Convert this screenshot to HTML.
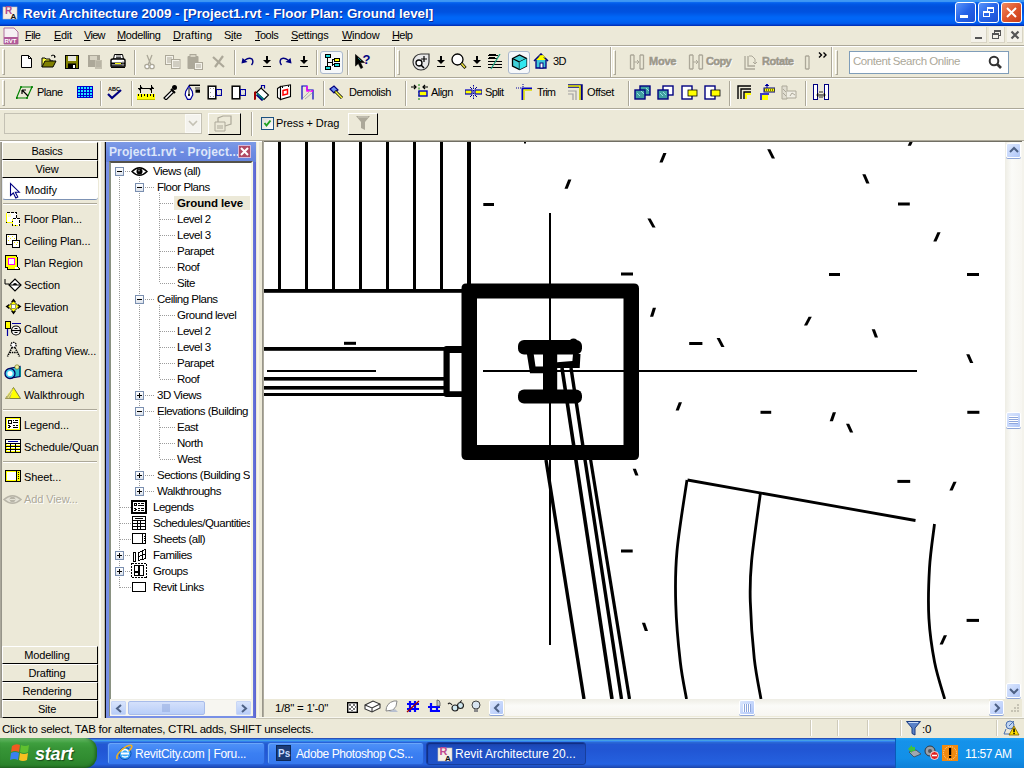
<!DOCTYPE html>
<html><head><meta charset="utf-8">
<style>
*{margin:0;padding:0;box-sizing:border-box}
html,body{width:1024px;height:768px;overflow:hidden;background:#ece9d8;font-family:"Liberation Sans",sans-serif;font-size:11px;color:#000}
div,svg,span{position:absolute}
.nw{white-space:nowrap}
#title{left:0;top:0;width:1024px;height:26px;background:linear-gradient(#409af4 0,#3a94f4 1.5px,#0a68f0 2.5px,#0058e6 4px,#0050dc 7px,#0052e0 12px,#0066f6 17px,#0066f8 19px,#0060f0 22px,#0056e8 24px,#0036c4 25px,#0030b0 26px)}
.tt{left:23px;top:6px;color:#fff;font-weight:bold;font-size:13.4px;text-shadow:1px 1px 0 #0c2a9a}
.tbtn{top:2px;width:21px;height:21px;border:1px solid #fff;border-radius:3px;background:linear-gradient(135deg,#5b95fa,#2563e8 50%,#1c50d4)}
.mi{top:30px;font-size:11px;line-height:11px;letter-spacing:-0.4px}
.mi u{text-decoration:underline;text-underline-offset:1px}
.hsep{height:2px;border-top:1px solid #aca899;border-bottom:1px solid #fff}
.grip{width:3px;border-left:1px solid #fff;border-top:1px solid #fff;border-right:1px solid #aca899;border-bottom:1px solid #aca899}
.vs{width:2px;border-left:1px solid #aca899;border-right:1px solid #fff}
.lbl{font-size:11px;line-height:11px;white-space:nowrap;letter-spacing:-0.1px}
.dis{color:#9c988a;font-weight:bold;text-shadow:1px 1px 0 #fff;-webkit-text-stroke:0.5px #9c988a}
.tree{font-size:11.5px;line-height:12px;white-space:nowrap;letter-spacing:-0.5px}
.dbtn{left:2px;width:96px;height:18px;background:#ece9d8;border-top:1px solid #fff;border-left:1px solid #fff;border-right:1px solid #000;border-bottom:1px solid #000;text-align:center;font-size:11px;line-height:16px;letter-spacing:-0.2px;padding-right:6px}
.dl{left:24px;font-size:11px;line-height:12px;white-space:nowrap;letter-spacing:-0.1px}
.dots{border-left:1px dotted #a0a0a0}
.doth{border-top:1px dotted #a0a0a0;height:1px}
.pm{width:9px;height:9px;border:1px solid #7a8fb0;background:linear-gradient(#fff,#dde3ec);}
.pm:before{content:"";position:absolute;left:1px;top:3px;width:5px;height:1px;background:#000}
.pm.p:after{content:"";position:absolute;left:3px;top:1px;width:1px;height:5px;background:#000}
</style></head><body>

<!-- ============ TITLE BAR ============ -->
<div id="title">
  <svg style="left:2px;top:4px" width="17" height="17" viewBox="0 0 17 17">
    <rect x="1" y="3" width="14" height="12" fill="#f4efe6" stroke="#c8c0b8" stroke-width="0.6"/>
    <text x="3" y="10" font-family="Liberation Sans" font-weight="bold" font-size="10" fill="#b04a8a">R</text>
    <text x="8.5" y="15" font-family="Liberation Sans" font-weight="bold" font-size="8" fill="#111">A</text>
  </svg>
  <div class="tt nw">Revit Architecture 2009 - [Project1.rvt - Floor Plan: Ground level]</div>
  <div class="tbtn" style="left:955px"><div style="left:4px;top:12px;width:8px;height:3px;background:#fff"></div></div>
  <div class="tbtn" style="left:978px">
    <div style="left:8px;top:4px;width:7px;height:6px;border:1px solid #fff;border-top-width:2px"></div>
    <div style="left:4px;top:8px;width:7px;height:6px;border:1px solid #fff;border-top-width:2px;background:#2a66e8"></div>
  </div>
  <div class="tbtn" style="left:1001px;background:linear-gradient(135deg,#f08a60,#e0562c 50%,#c83c18)">
    <svg style="left:3px;top:3px" width="13" height="13"><path d="M2 2L11 11M11 2L2 11" stroke="#fff" stroke-width="2"/></svg>
  </div>
</div>

<!-- ============ MENU BAR ============ -->
<div id="menu" style="left:0;top:26px;width:1024px;height:20px;background:#ece9d8">
</div>
<svg style="left:2px;top:27px" width="18" height="18" viewBox="0 0 18 18">
  <path d="M2 1H12L16 5V17H2Z" fill="#f6f0f4" stroke="#b070a0" stroke-width="1"/>
  <rect x="2" y="10" width="14" height="7" fill="#b05a98"/>
  <text x="2.5" y="16.3" font-family="Liberation Sans" font-weight="bold" font-size="6" fill="#fff">RVT</text>
</svg>
<div class="mi nw" style="left:25px;letter-spacing:-0.6px"><u>F</u>ile</div>
<div class="mi nw" style="left:54px;letter-spacing:-0.3px"><u>E</u>dit</div>
<div class="mi nw" style="left:84px;letter-spacing:-0.7px"><u>V</u>iew</div>
<div class="mi nw" style="left:117px;letter-spacing:-0.4px"><u>M</u>odelling</div>
<div class="mi nw" style="left:173px;letter-spacing:0.1px"><u>D</u>rafting</div>
<div class="mi nw" style="left:224px;letter-spacing:-0.3px">S<u>i</u>te</div>
<div class="mi nw" style="left:255px;letter-spacing:-0.5px"><u>T</u>ools</div>
<div class="mi nw" style="left:291px;letter-spacing:-0.3px"><u>S</u>ettings</div>
<div class="mi nw" style="left:342px;letter-spacing:-0.3px"><u>W</u>indow</div>
<div class="mi nw" style="left:392px;letter-spacing:-0.6px"><u>H</u>elp</div>
<!-- MDI buttons -->
<div style="left:971px;top:27px;width:16px;height:16px;background:#f4f2ea;border-right:1px solid #d8d4c4;border-bottom:1px solid #d8d4c4"><div style="left:4px;top:10px;width:7px;height:2px;background:#555"></div></div>
<div style="left:989px;top:27px;width:16px;height:16px;background:#f4f2ea;border-right:1px solid #d8d4c4;border-bottom:1px solid #d8d4c4">
  <div style="left:5px;top:3px;width:7px;height:6px;border:1px solid #555;border-top-width:2px"></div>
  <div style="left:3px;top:6px;width:7px;height:6px;border:1px solid #555;border-top-width:2px;background:#f4f2ea"></div>
</div>
<div style="left:1007px;top:27px;width:16px;height:16px;background:#f4f2ea;border-right:1px solid #d8d4c4;border-bottom:1px solid #d8d4c4">
  <svg style="left:3px;top:3px" width="10" height="10"><path d="M1.5 1.5L8.5 8.5M8.5 1.5L1.5 8.5" stroke="#555" stroke-width="2.2"/></svg>
</div>
<div class="hsep" style="left:0;top:45px;width:1024px"></div>

<!-- ============ TOOLBAR ROW 1 ============ -->
<div class="grip" style="left:2px;top:49px;height:26px"></div>
<!-- new -->
<svg style="left:21px;top:54px" width="12" height="15"><path d="M0.5 1.5H7.5L10.5 4.5V13.5H0.5Z" fill="#fff" stroke="#000"/><path d="M7.5 1.5V4.5H10.5" fill="none" stroke="#000"/></svg>
<!-- open -->
<svg style="left:41px;top:54px" width="17" height="15"><path d="M10 2Q12 0 14 2" fill="none" stroke="#000"/><path d="M13 1l2 2-2 1z" fill="#000"/><path d="M1 13V4H4L5 5H9V7H12" fill="#ffff40" stroke="#000"/><path d="M1 13L4 7H15L12 13Z" fill="#808000" stroke="#000"/></svg>
<!-- save -->
<svg style="left:65px;top:55px" width="15" height="14"><rect x="0.5" y="0.5" width="13" height="13" fill="#808000" stroke="#000"/><rect x="3" y="1" width="8" height="5" fill="#e8e8e0"/><rect x="3" y="8.5" width="8" height="5" fill="#000"/><rect x="8" y="10" width="2" height="3" fill="#fff"/></svg>
<!-- save as disabled -->
<svg style="left:87px;top:54px" width="17" height="16"><rect x="1" y="1" width="12" height="12" fill="#aca899"/><rect x="3" y="2" width="7" height="4" fill="#d8d4c4"/><path d="M8 6l7 0 0 9-7 0z" fill="#c4c0b0"/><path d="M9 8h5M9 10h5M9 12h5" stroke="#aca899"/></svg>
<!-- print -->
<svg style="left:110px;top:54px" width="16" height="15"><path d="M4.5 0.5H12.5L13.5 5H3.5Z" fill="#fff" stroke="#000"/><path d="M6 2H11M6 3.5H11" stroke="#000" stroke-width="0.7"/><path d="M1 6.5Q1 5 3 5H13Q15 5 15 6.5V12H1Z" fill="#fff" stroke="#000" stroke-width="1.4"/><rect x="1" y="8.5" width="14" height="2" fill="#000"/><rect x="5" y="9" width="6" height="1" fill="#ff0"/><path d="M1 13.3H15" stroke="#000" stroke-width="1.4"/><path d="M13 7V12" stroke="#888" stroke-width="0.8"/></svg>
<div class="vs" style="left:134px;top:50px;height:25px"></div>
<!-- cut -->
<svg style="left:144px;top:54px" width="11" height="16"><path d="M3 1L7 11M8 1L4 11" stroke="#aca899" stroke-width="1.3"/><circle cx="3" cy="12.5" r="2.2" fill="#fff" stroke="#aca899" stroke-width="1.3"/><circle cx="8" cy="12.5" r="2.2" fill="#fff" stroke="#aca899" stroke-width="1.3"/></svg>
<!-- copy -->
<svg style="left:165px;top:54px" width="16" height="15"><rect x="0.5" y="1.5" width="8" height="9" fill="#f4f2ea" stroke="#aca899"/><path d="M2 4h5M2 6h5M2 8h5" stroke="#aca899"/><rect x="6.5" y="5.5" width="8.5" height="9" fill="#f4f2ea" stroke="#aca899"/><path d="M8 8h6M8 10h6M8 12h6" stroke="#aca899"/></svg>
<!-- paste -->
<svg style="left:187px;top:54px" width="17" height="16"><rect x="0.5" y="2" width="11" height="13" rx="1" fill="#aca899"/><rect x="3" y="0.5" width="6" height="3" fill="#d8d4c4" stroke="#aca899"/><rect x="7.5" y="8.5" width="8" height="7" fill="#f4f2ea" stroke="#aca899"/><path d="M9 11h5M9 13h5" stroke="#aca899"/></svg>
<!-- delete -->
<svg style="left:212px;top:55px" width="14" height="14"><path d="M1 2L12 12M11 1L3 12" stroke="#aca899" stroke-width="2.2"/></svg>
<div class="vs" style="left:234px;top:50px;height:25px"></div>
<!-- undo -->
<svg style="left:241px;top:56px" width="14" height="11"><path d="M4 4Q8 1 11 3Q13 6 10.5 9" fill="none" stroke="#000080" stroke-width="1.4"/><path d="M0.5 7.5L1.5 2L6.5 6Z" fill="#000080"/></svg>
<svg style="left:262px;top:55px" width="10" height="12"><path d="M5 1V8" stroke="#000" stroke-width="2"/><path d="M1 5H9L5 9Z" fill="#000"/><path d="M1 11.5H9" stroke="#000"/></svg>
<svg style="left:278px;top:56px" width="14" height="11"><path d="M10 4Q6 1 3 3Q1 6 3.5 9" fill="none" stroke="#000080" stroke-width="1.4"/><path d="M13.5 7.5L12.5 2L7.5 6Z" fill="#000080"/></svg>
<svg style="left:299px;top:55px" width="10" height="12"><path d="M5 1V8" stroke="#000" stroke-width="2"/><path d="M1 5H9L5 9Z" fill="#000"/><path d="M1 11.5H9" stroke="#000"/></svg>
<div class="vs" style="left:316px;top:50px;height:25px"></div>
<!-- pressed browser button -->
<div style="left:320px;top:51px;width:23px;height:23px;border:1px solid #aab8cc;border-radius:3px;background:#f6f8fa"></div>
<svg style="left:324px;top:54px" width="17" height="16" shape-rendering="crispEdges"><path d="M3.5 3V13M3.5 3H4M3.5 8H8.5M8.5 5V12M8.5 5.5H11M8.5 10.5H11" stroke="#000" fill="none"/><rect x="1.5" y="0.5" width="5" height="3" fill="#20d8d8" stroke="#000"/><rect x="1.5" y="12.5" width="5" height="3" fill="#20d8d8" stroke="#000"/><rect x="10.5" y="4.5" width="5" height="3" fill="#ffff00" stroke="#000"/><rect x="10.5" y="9.5" width="5" height="3" fill="#20d8d8" stroke="#000"/></svg>
<div class="vs" style="left:347px;top:50px;height:25px"></div>
<!-- context help -->
<svg style="left:355px;top:53px" width="17" height="17"><path d="M0.5 1.5V13L3.3 10.5L5.8 15.5L7.8 14.5L5.5 9.5H9.5Z" fill="#000" stroke="#000" stroke-width="0.6"/><path d="M3 5L6 8" stroke="#20a0a0" stroke-width="0.8"/><text x="7.5" y="11" font-family="Liberation Sans" font-weight="bold" font-size="13" fill="#000080">?</text></svg>
<!-- toolbar A right edge -->
<div class="vs" style="left:394px;top:47px;height:30px"></div>

<!-- toolbar B -->
<div class="grip" style="left:397px;top:50px;height:25px"></div>
<svg style="left:412px;top:53px" width="18" height="18"><path d="M9 1A8 8 0 1 0 17 9V1Z" fill="#e8e8e8" stroke="#333" stroke-width="1.2"/><circle cx="7" cy="10" r="3" fill="#fff" stroke="#000" stroke-width="1.3"/><path d="M9 12L12 15" stroke="#000" stroke-width="1.6"/><path d="M12 3V9M9 6H15" stroke="#000" stroke-width="1.2"/></svg>
<svg style="left:436px;top:55px" width="10" height="12"><path d="M5 1V8" stroke="#000" stroke-width="2"/><path d="M1 5H9L5 9Z" fill="#000"/><path d="M1 11.5H9" stroke="#000"/></svg>
<svg style="left:451px;top:53px" width="16" height="17"><circle cx="6.5" cy="6.5" r="5.5" fill="#fff" stroke="#000" stroke-width="1.3"/><path d="M10 10L14.5 15" stroke="#000" stroke-width="3"/><path d="M10.5 10.5L14 14.5" stroke="#e8e040" stroke-width="1.6"/></svg>
<svg style="left:472px;top:55px" width="10" height="12"><path d="M5 1V8" stroke="#000" stroke-width="2"/><path d="M1 5H9L5 9Z" fill="#000"/><path d="M1 11.5H9" stroke="#000"/></svg>
<svg style="left:488px;top:54px" width="15" height="16" shape-rendering="crispEdges"><path d="M0 1.5H10M0 4.5H9M0 7.5H14M0 10.5H14M0 13.5H14" stroke="#000" stroke-width="1.6"/><path d="M1 0.5H8M1 3.5H7" stroke="#000"/><path d="M12 0L3 15" stroke="#20a080" stroke-width="1.3" shape-rendering="auto"/></svg>
<div style="left:508px;top:51px;width:22px;height:23px;border:1px solid #aab8cc;border-radius:3px;background:#f6f8fa"></div>
<svg style="left:511px;top:54px" width="17" height="17"><path d="M1.5 4.5L8.5 1L15.5 4.5V12L8.5 15.5L1.5 12Z" fill="#40d0d8" stroke="#000" stroke-width="1.3"/><path d="M1.5 4.5L8.5 8L15.5 4.5M8.5 8V15.5" fill="none" stroke="#000" stroke-width="1.3"/><path d="M8.5 8L15.5 4.5V12L8.5 15.5Z" fill="#30e8f0"/></svg>
<svg style="left:533px;top:53px" width="17" height="17"><path d="M1 8L8 1L15 8" fill="#ff0" stroke="#000080" stroke-width="1.5"/><path d="M3 7V15H13V7" fill="#40c8d8" stroke="#000080" stroke-width="1.3"/><rect x="7" y="10" width="3" height="5" fill="#fff" stroke="#000080"/><path d="M5 3L10 2L13 5" fill="#ff0"/></svg>
<div class="lbl" style="left:553px;top:56px;letter-spacing:-0.5px">3D</div>
<div class="vs" style="left:610px;top:47px;height:30px"></div>

<!-- toolbar C -->
<div class="grip" style="left:613px;top:50px;height:25px"></div>
<svg style="left:629px;top:54px" width="16" height="16"><path d="M1.5 1V15M5 1V15M1.5 1H5M1.5 15H5M11 1V15M14.5 1V15M11 1H14.5M11 15H14.5" stroke="#aca899" stroke-width="1.3" fill="none"/><path d="M5 8H10M8 6L10 8L8 10" stroke="#aca899" fill="none"/></svg>
<div class="lbl dis" style="left:649px;top:56px;letter-spacing:-0.25px">Move</div>
<svg style="left:688px;top:54px" width="16" height="16"><path d="M1.5 1V15M5 1V15M1.5 1H5M1.5 15H5M11 1V15M14.5 1V15M11 1H14.5M11 15H14.5" stroke="#aca899" stroke-width="1.3" fill="none"/><path d="M5 8H10M8 6L10 8L8 10" stroke="#aca899" fill="none"/></svg>
<div class="lbl dis" style="left:706px;top:56px;letter-spacing:-0.6px">Copy</div>
<svg style="left:743px;top:54px" width="16" height="16"><path d="M2 2V15H12M5 2V12H12" stroke="#aca899" stroke-width="1.3" fill="none"/><path d="M6 2H9L12 5V9" stroke="#aca899" fill="none"/><path d="M10 8L12 10L14 8" stroke="#aca899" fill="none"/></svg>
<div class="lbl dis" style="left:762px;top:56px;letter-spacing:-0.45px">Rotate</div>
<svg style="left:804px;top:54px" width="8" height="16"><path d="M1.5 2V15M5 2V15M1.5 15H5M1.5 2H5" stroke="#aca899" stroke-width="1.3" fill="none"/></svg>
<svg style="left:818px;top:52px" width="10" height="6"><path d="M1 0.5L3.5 3L1 5.5M5.5 0.5L8 3L5.5 5.5" stroke="#000" stroke-width="1.4" fill="none"/></svg>
<div class="vs" style="left:831px;top:47px;height:30px"></div>

<!-- toolbar D : search -->
<div class="grip" style="left:835px;top:50px;height:25px"></div>
<div style="left:849px;top:51px;width:160px;height:23px;background:#fff;border:1px solid #7f9db9"></div>
<div class="lbl" style="left:853px;top:56px;color:#aca899;font-size:11.5px;letter-spacing:-0.45px">Content Search Online</div>
<svg style="left:988px;top:55px" width="15" height="15"><circle cx="6" cy="6" r="4.3" fill="none" stroke="#333" stroke-width="2"/><path d="M9 9L13 13" stroke="#333" stroke-width="2.6"/></svg>
<div class="hsep" style="left:0;top:77px;width:1024px"></div>
<!-- ============ TOOLBAR ROW 2 ============ -->
<div class="grip" style="left:2px;top:80px;height:26px"></div>
<svg style="left:16px;top:85px" width="18" height="16"><path d="M5 2H16L11 13H0.5Z" fill="none" stroke="#008000" stroke-width="1.2"/><circle cx="5" cy="2" r="1" fill="#008000"/><circle cx="16" cy="2" r="1" fill="#008000"/><circle cx="11" cy="13" r="1" fill="#008000"/><circle cx="0.8" cy="13" r="1" fill="#008000"/><path d="M6 5V9M6 5H10M6 5L12 11" stroke="#000" stroke-width="1.2" fill="none"/></svg>
<div class="lbl" style="left:37px;top:87px;letter-spacing:-0.5px">Plane</div>
<svg style="left:77px;top:86px" width="16" height="12" shape-rendering="crispEdges"><rect x="0" y="0" width="16" height="12" fill="#20e8ff"/><path d="M0 0.5H16M0 3.5H16M0 6.5H16M0 9.5H16M0 11.5H16M0.5 0V12M3.5 0V12M6.5 0V12M9.5 0V12M12.5 0V12M15.5 0V12" stroke="#0000d0" stroke-width="1"/></svg>
<div class="vs" style="left:100px;top:81px;height:25px"></div>
<svg style="left:107px;top:86px" width="15" height="14"><text x="1" y="5" font-family="Liberation Sans" font-weight="bold" font-size="5.5" fill="#000">ABC</text><path d="M1 8L5 12L14 4" stroke="#000080" stroke-width="2.2" fill="none"/></svg>
<div class="vs" style="left:131px;top:81px;height:25px"></div>
<svg style="left:137px;top:84px" width="18" height="16" shape-rendering="crispEdges"><path d="M3.5 1V9M14.5 1V9M1 4.5H17" stroke="#000"/><path d="M2 6L5 3M13 6L16 3" stroke="#000" stroke-width="1.2" shape-rendering="auto"/><rect x="0" y="10" width="18" height="5" fill="#ffff00"/><path d="M1.5 10V12M4.5 10V13M7.5 10V12M10.5 10V13M13.5 10V12M16.5 10V13" stroke="#000" stroke-width="1.5"/><path d="M0 15.5H18" stroke="#c0c000"/></svg>
<svg style="left:162px;top:84px" width="16" height="16"><path d="M2 14L10 6L12 8L4 16Z" fill="#fff" stroke="#000" stroke-width="1.2"/><circle cx="12.5" cy="3.5" r="2.5" fill="#000"/><path d="M9 5L13 9" stroke="#000" stroke-width="2"/></svg>
<svg style="left:184px;top:84px" width="17" height="17"><path d="M5 2L8.3 7.5L8.8 11L6.5 15.3H3.5L1.2 11L1.7 7.5Z" fill="#fff" stroke="#0000a0" stroke-width="1.2"/><path d="M5 4V12" stroke="#000" stroke-width="1"/><circle cx="5" cy="11" r="1" fill="#000"/><path d="M5 1.3H16" stroke="#000" stroke-width="1.4"/><rect x="11.5" y="5.5" width="4.5" height="3.2" fill="#000"/><path d="M11 4H16" stroke="#000" stroke-width="0.8"/></svg>
<svg style="left:207px;top:85px" width="15" height="15"><rect x="1.2" y="1.2" width="7.6" height="12.6" fill="#fff" stroke="#000" stroke-width="1.5"/><rect x="9.5" y="4.5" width="5" height="6" fill="#c8c8c0" stroke="#0000a0"/><path d="M3 3.5h1M6 3.5h1M3 7.5h1M3 11.5h1M6 11.5h1" stroke="#999"/><path d="M10 6h1M12 6h1M11 7h1M13 7h1M10 8h1M12 8h1M11 9h1" stroke="#fff"/></svg>
<svg style="left:231px;top:85px" width="15" height="15"><rect x="1.2" y="1.2" width="7.6" height="12.6" fill="#fff" stroke="#000" stroke-width="1.5"/><rect x="9.5" y="4.5" width="5" height="6" fill="#c8c8c0" stroke="#0000a0"/><path d="M10 6h1M12 6h1M11 7h1M13 7h1M10 8h1M12 8h1M11 9h1" stroke="#fff"/></svg>
<svg style="left:253px;top:84px" width="17" height="17"><path d="M1 8L3 7V15.5L1 16Z" fill="#a00000"/><path d="M8.5 4.5V1.5H11.5V4.5" fill="none" stroke="#0000a0" stroke-width="1.2"/><path d="M3.5 8.5L8 4L15.5 11L11 15.5Z" fill="#fff" stroke="#000" stroke-width="1.1"/><path d="M4 9.5L10.5 15.5" stroke="#008080" stroke-width="2"/><path d="M3.5 11L9.5 16.5" stroke="#000080" stroke-width="1.6"/></svg>
<svg style="left:276px;top:84px" width="16" height="17"><path d="M1.5 4.5L4.5 2.5V15.5L1.5 13.5Z" fill="#fff" stroke="#000" stroke-width="1.1"/><path d="M4.5 2.5L14.5 0.8V12.5L4.5 15.5Z" fill="#fff" stroke="#000" stroke-width="1.1"/><path d="M6.5 2.2V4M12.5 1.2V3" stroke="#000"/><path d="M7 6.5L11.5 5.5V10L7 11Z" fill="none" stroke="#ff0000" stroke-width="1.5"/></svg>
<svg style="left:301px;top:85px" width="13" height="15"><path d="M1 0.5V14.5M1 1H6V5H12V14.5" fill="none" stroke="#0000c0" stroke-width="1.2"/><path d="M6 1V6H12" fill="none" stroke="#ff00ff" stroke-width="1.5"/><path d="M2 13L10 5M4 14L11 8" stroke="#b0b0b0"/></svg>
<div class="vs" style="left:323px;top:81px;height:25px"></div>
<svg style="left:329px;top:85px" width="15" height="15"><path d="M1 4L5 1L9 5L5 8Z" fill="#7090f0" stroke="#000080" stroke-width="1.2"/><path d="M6 6L13 13" stroke="#000" stroke-width="3"/><path d="M6.5 6.5L13 13" stroke="#ffff40" stroke-width="1.5"/></svg>
<div class="lbl" style="left:349px;top:87px;letter-spacing:-0.5px">Demolish</div>
<div class="vs" style="left:405px;top:81px;height:25px"></div>
<svg style="left:411px;top:84px" width="17" height="16"><path d="M0 3H5M12 3H17M3 1L5 3L3 5M14 1L12 3L14 5" stroke="#000" stroke-width="1.2" fill="none"/><path d="M8 0V16" stroke="#008000" stroke-dasharray="2 1.5"/><rect x="8" y="7" width="8" height="5" fill="#ffff00" stroke="#0000c0" stroke-width="1.4"/></svg>
<div class="lbl" style="left:431px;top:87px;letter-spacing:-0.55px">Align</div>
<svg style="left:465px;top:85px" width="17" height="14"><path d="M8.5 0V14" stroke="#0000a0" stroke-dasharray="1.5 1"/><rect x="0" y="5" width="7" height="4" fill="#ff0" stroke="#0000c0" stroke-width="1.2"/><rect x="10" y="5" width="7" height="4" fill="#ff0" stroke="#0000c0" stroke-width="1.2"/><path d="M5 2L7 4M12 2L10 4M5 12L7 10M12 12L10 10" stroke="#000080"/></svg>
<div class="lbl" style="left:485px;top:87px;letter-spacing:-0.6px">Split</div>
<svg style="left:516px;top:84px" width="16" height="16"><path d="M0 4H5M7 0V3" stroke="#0000a0" stroke-dasharray="1 1"/><path d="M7 16V5H16" stroke="#0000c0" stroke-width="3" fill="none"/><path d="M8 16V6H16" stroke="#ff0" stroke-width="1.5" fill="none"/></svg>
<div class="lbl" style="left:537px;top:87px;letter-spacing:-0.9px">Trim</div>
<svg style="left:567px;top:84px" width="16" height="16"><path d="M1 2H14V16" stroke="#000080" stroke-width="3.5" fill="none"/><path d="M1 2H13V16" stroke="#ff0" stroke-width="1.5" fill="none"/><path d="M1 7H9V16M1 10H6V16" stroke="#a0a0a0" stroke-width="1.2" fill="none"/></svg>
<div class="lbl" style="left:587px;top:87px;letter-spacing:-0.35px">Offset</div>
<div class="vs" style="left:628px;top:81px;height:25px"></div>
<svg style="left:634px;top:85px" width="17" height="15"><rect x="6" y="1" width="10" height="9" fill="#40a0a0" stroke="#000080" stroke-width="1.4"/><rect x="1" y="5" width="10" height="9" fill="#40a0a0" stroke="#000080" stroke-width="1.4"/><path d="M7 6L10 9M12 3L15 6M3 8L6 11" stroke="#90e0e0"/></svg>
<svg style="left:657px;top:85px" width="17" height="15"><rect x="6" y="1" width="10" height="9" fill="#fff" stroke="#000080" stroke-width="1.4"/><rect x="1" y="5" width="10" height="9" fill="#40a0a0" stroke="#000080" stroke-width="1.4"/><path d="M3 8L6 11M6 7L9 10" stroke="#90e0e0"/></svg>
<svg style="left:681px;top:85px" width="17" height="15"><rect x="1" y="1" width="10" height="13" fill="#fff" stroke="#000080" stroke-width="1.4"/><rect x="7" y="5" width="9" height="6" fill="#ffff00" stroke="#000" stroke-width="0.8"/></svg>
<svg style="left:704px;top:85px" width="17" height="15"><rect x="1" y="1" width="10" height="13" fill="#fff" stroke="#000080" stroke-width="1.4"/><rect x="7" y="5" width="9" height="6" fill="#ffff00" stroke="#000" stroke-width="0.8"/><path d="M7 5V11" stroke="#000080"/></svg>
<div class="vs" style="left:729px;top:81px;height:25px"></div>
<svg style="left:737px;top:85px" width="15" height="15"><path d="M1 14V1H14M4 14V4H14" stroke="#000" stroke-width="1.4" fill="none"/><path d="M7 14V7H14" stroke="#000" stroke-width="1.4" fill="none"/><path d="M9 14V9H14" stroke="#ff0" stroke-width="2" fill="none"/></svg>
<svg style="left:759px;top:84px" width="16" height="16"><rect x="5" y="4" width="11" height="4" fill="#ff0" stroke="#000080"/><path d="M5 6H16" stroke="#000" stroke-dasharray="1 1"/><path d="M1 10H10M2 11V16M5 11V16" stroke="#0000c0" stroke-width="1.5"/><rect x="3" y="11" width="6" height="5" fill="#ff0"/><path d="M8 0V4M6 2L8 0L10 2" stroke="#0000c0"/></svg>
<svg style="left:781px;top:85px" width="16" height="15"><path d="M1 1H6V14H1Z" fill="#e0ddd0" stroke="#aca899"/><path d="M6 6H15V13H6" fill="#f0eee4" stroke="#aca899"/><path d="M2 4L5 7M2 8L5 11" stroke="#aca899"/><path d="M9 11L11 8L14 10" stroke="#aca899" fill="none"/></svg>
<div class="vs" style="left:805px;top:81px;height:25px"></div>
<svg style="left:813px;top:84px" width="16" height="16"><rect x="0.5" y="0.5" width="4" height="15" fill="#fff" stroke="#000080"/><rect x="11.5" y="0.5" width="4" height="15" fill="#fff" stroke="#000080"/><path d="M4 11H12" stroke="#000" stroke-width="1"/><path d="M5 9L4 11L5 13M11 9L12 11L11 13" stroke="#000" fill="none"/><path d="M6 8H10M6 13H10" stroke="#000" stroke-width="0.8"/></svg>
<div class="hsep" style="left:0;top:108px;width:1024px"></div>

<!-- ============ OPTIONS BAR ============ -->
<div style="left:4px;top:113px;width:198px;height:21px;border:1px solid #c4c1b4;background:#ece9d8"></div>
<div style="left:185px;top:114px;width:16px;height:19px;background:#f4f3ee;border:1px solid #fbfaf6"></div>
<svg style="left:188px;top:120px" width="10" height="7"><path d="M1 1L5 5L9 1" stroke="#c4c1b4" stroke-width="1.6" fill="none"/></svg>
<div style="left:208px;top:113px;width:33px;height:22px;border-top:1px solid #fff;border-left:1px solid #fff;border-right:1px solid #000;border-bottom:1px solid #000;background:#ece9d8"></div>
<svg style="left:214px;top:115px" width="20" height="17"><path d="M1 7H11V16H1Z" fill="none" stroke="#aca899"/><path d="M4 7V3L9 1H17V9L11 11" fill="none" stroke="#aca899" stroke-width="1.2"/><path d="M3 11H9M3 13H9" stroke="#aca899"/></svg>
<div class="vs" style="left:251px;top:112px;height:24px"></div>
<div style="left:261px;top:117px;width:13px;height:13px;border:1px solid #1c5180;background:linear-gradient(135deg,#dcdcd6,#fff)"></div>
<svg style="left:262px;top:118px" width="11" height="11"><path d="M2.5 5L4.5 7.5L8.5 2.5" stroke="#21a121" stroke-width="2" fill="none"/></svg>
<div class="lbl" style="left:276px;top:118px;letter-spacing:-0.1px">Press + Drag</div>
<div style="left:348px;top:113px;width:30px;height:22px;border-top:1px solid #fff;border-left:1px solid #fff;border-right:1px solid #000;border-bottom:1px solid #000;background:#ece9d8"></div>
<svg style="left:355px;top:115px" width="16" height="17"><path d="M1 1H15L10 7V15L6 13V7Z" fill="#aca899"/><path d="M3 2H13" stroke="#d0cdc0"/></svg>


<!-- ============ DESIGN BAR ============ -->
<div style="left:0;top:140px;width:1024px;height:1px;background:#aca899"></div>
<div style="left:0;top:141px;width:262px;height:1px;background:#fff"></div>
<div style="left:0;top:142px;width:2px;height:576px;background:linear-gradient(90deg,#b4b1a4,#8c8a80)"></div>
<div style="left:98px;top:142px;width:7px;height:576px;background:linear-gradient(90deg,#ece9d8 0 1px,#fdfcf6 1px 3px,#ece9d8 3px 6px,#bdb9a8 6px)"></div>
<div class="dbtn" style="top:142px">Basics</div>
<div class="dbtn" style="top:160px">View</div>
<div style="left:2px;top:178px;width:96px;height:22px;background:#fff;border-radius:3px;border-bottom:1px solid #7d92b4;border-left:1px solid #e4e8f0"></div>
<svg style="left:9px;top:182px" width="12" height="17"><path d="M1.5 1.5V13.5L4.3 11L6.8 16L8.8 15L6.3 10.2H10.3Z" fill="#fff" stroke="#000080" stroke-width="1.1" stroke-linejoin="miter"/></svg>
<div class="dl" style="left:25px;top:184px">Modify</div>
<div style="left:3px;top:203px;width:94px;height:2px;border-top:1px solid #aca899;border-bottom:1px solid #fff"></div>

<svg style="left:5px;top:211px" width="16" height="16" shape-rendering="crispEdges"><rect x="1.5" y="1.5" width="10" height="10" fill="#fff" stroke="#000" stroke-dasharray="3 1"/><path d="M1.5 2V11M2 11.5H11" stroke="#ff0"/><rect x="7.5" y="7.5" width="7" height="7" fill="#fff" stroke="#000" stroke-dasharray="3 1"/><path d="M7.5 8V14M8 14.5H14" stroke="#ff0" stroke-dasharray="2 1"/><rect x="3" y="3" width="3" height="3" fill="#ffffc0"/></svg>
<div class="dl" style="top:213px">Floor Plan...</div>
<svg style="left:5px;top:233px" width="16" height="16" shape-rendering="crispEdges"><rect x="1.5" y="1.5" width="10" height="10" fill="#fff" stroke="#000" stroke-width="1"/><rect x="7.5" y="7.5" width="7" height="7" fill="#fff" stroke="#000"/><path d="M3 3h1v1H3zM5 5h1v1H5zM3 7h1v1H3zM7 3h1v1H7zM9 5h1v1H9zM9 9h1v1H9zM11 11h1v1h-1zM12 9h1v1h-1z" fill="#e8e000"/></svg>
<div class="dl" style="top:235px">Ceiling Plan...</div>
<svg style="left:5px;top:255px" width="16" height="16" shape-rendering="crispEdges"><path d="M0.5 0.5H11.5L12.5 3.5V11.5L14.5 13.5V14.5H2.5V12.5H0.5Z" fill="#ffff00" stroke="#000"/><rect x="3.5" y="3.5" width="6" height="6" fill="#fff" stroke="#ff00ff" stroke-width="1.2"/><path d="M10 12H13V13.5H10Z" fill="#fff"/></svg>
<div class="dl" style="top:257px">Plan Region</div>
<svg style="left:4px;top:277px" width="18" height="16"><path d="M1 2V7H5" stroke="#000" fill="none"/><path d="M5 8L11 2L17 8L11 14Z" fill="#fff" stroke="#000" stroke-width="1.2"/><path d="M5 8H17" stroke="#000"/><path d="M9 8A2 2 0 0 1 13 8" fill="#000"/></svg>
<div class="dl" style="top:279px">Section</div>
<svg style="left:5px;top:298px" width="17" height="17"><path d="M8.5 0.5L11 4H6Z M8.5 16.5L11 13H6Z M0.5 8.5L4 6V11Z M16.5 8.5L13 6V11Z" fill="#000"/><path d="M8.5 3L14 8.5L8.5 14L3 8.5Z" fill="#ffff00" stroke="#000" stroke-width="0.8"/><rect x="6.5" y="6.5" width="4" height="4" fill="#fff" stroke="#555" stroke-width="0.6"/></svg>
<div class="dl" style="top:301px">Elevation</div>
<svg style="left:4px;top:320px" width="18" height="17"><path d="M3.5 8V16M8 3.5H17" stroke="#0000a0" stroke-width="1.2"/><rect x="1.5" y="1.5" width="5" height="7" fill="#ffff00" stroke="#000" stroke-width="1"/><circle cx="12" cy="10.5" r="4.5" fill="#fff" stroke="#000" stroke-width="1.2"/><path d="M7.5 10.5H16.5" stroke="#000" stroke-width="1.2"/><path d="M10.5 8.5H13.5M10.5 12.5H13.5" stroke="#000"/></svg>
<div class="dl" style="top:323px">Callout</div>
<svg style="left:5px;top:341px" width="16" height="17"><circle cx="8.5" cy="4" r="2.6" fill="#fff" stroke="#000" stroke-width="1.3" stroke-dasharray="1.5 0.8"/><path d="M7 6.5L2.5 15.5M10 6.5L14.5 15.5M4.5 11.5H12.5" stroke="#000" stroke-width="1.6" stroke-dasharray="1.5 0.8"/></svg>
<div class="dl" style="top:345px">Drafting View...</div>
<svg style="left:4px;top:364px" width="18" height="16"><path d="M7 4L16 2.5V12.5L7 14Z" fill="#30c0d0" stroke="#000060" stroke-width="1.2"/><path d="M16 2.5L17 3.5V13L16 12.5" fill="#008090"/><circle cx="13" cy="3" r="2.2" fill="#f0f0a0" stroke="#606000" stroke-width="0.6"/><circle cx="6" cy="9.5" r="5" fill="#40d0f0" stroke="#000060" stroke-width="1.3"/><circle cx="6" cy="9.5" r="2.6" fill="#fff"/></svg>
<div class="dl" style="top:367px">Camera</div>
<svg style="left:4px;top:386px" width="18" height="14"><path d="M1.5 12.5L9.5 1.5L16.5 12.5Z" fill="#ffff00" stroke="#808040" stroke-width="1"/><path d="M1.5 12.5L9.5 1.5L6 12.5Z" fill="#b8b070"/><path d="M3 10L8 3M4 12L8.5 5" stroke="#ffff80" stroke-width="0.8"/></svg>
<div class="dl" style="top:389px">Walkthrough</div>
<div style="left:3px;top:409px;width:94px;height:2px;border-top:1px solid #aca899;border-bottom:1px solid #fff"></div>
<svg style="left:5px;top:417px" width="16" height="15" shape-rendering="crispEdges"><rect x="0.5" y="0.5" width="15" height="13" fill="#fff" stroke="#000"/><rect x="1.5" y="1.5" width="13" height="11" fill="none" stroke="#ffff00"/><rect x="3.5" y="3.5" width="3" height="3" fill="#fff" stroke="#000"/><path d="M8 3.5H9M10 3.5H13M8 5.5H13M3 8.5H5M3 10.5H5M8 8.5H10M11 8.5H13M8 10.5H13" stroke="#000"/><path d="M4 9.5H6" stroke="#000"/></svg>
<div class="dl" style="top:419px">Legend...</div>
<svg style="left:5px;top:439px" width="16" height="15" shape-rendering="crispEdges"><rect x="0.5" y="0.5" width="15" height="13" fill="#ffff00" stroke="#000"/><rect x="1" y="1" width="14" height="3" fill="#fff"/><path d="M3 2.5H13" stroke="#0000a0"/><path d="M1 4.5H15M1 7.5H15M1 10.5H15M5.5 4V13M10.5 4V13" stroke="#000"/><path d="M2 5.5H5M6 5.5H10M11 5.5H15M2 8.5H5M6 8.5H10M11 8.5H15M2 11.5H5M6 11.5H10M11 11.5H15" stroke="#fff"/></svg>
<div class="dl" style="top:441px">Schedule/Quan</div>
<div style="left:3px;top:461px;width:94px;height:2px;border-top:1px solid #aca899;border-bottom:1px solid #fff"></div>
<svg style="left:5px;top:470px" width="16" height="13" shape-rendering="crispEdges"><rect x="0.5" y="0.5" width="15" height="11" fill="#ffff00" stroke="#000"/><rect x="2" y="2" width="9" height="8" fill="#fff"/><path d="M11.5 1V11" stroke="#000"/><path d="M13 2.5H14M13 4.5H14M13 6.5H14M13 8.5H14" stroke="#000"/></svg>
<div class="dl" style="top:471px">Sheet...</div>
<svg style="left:3px;top:493px" width="19" height="13"><path d="M1 6.5Q9.5 -1 18 6.5Q9.5 14 1 6.5Z" fill="#e4e2d6" stroke="#b8b5a8" stroke-width="1.6"/><circle cx="9.5" cy="6.5" r="2.8" fill="#b8b5a8"/><path d="M7 6.5H12" stroke="#e4e2d6"/></svg>
<div class="dl" style="top:493px;color:#aca899;text-shadow:1px 1px 0 #fff">Add View...</div>

<div class="dbtn" style="top:646px">Modelling</div>
<div class="dbtn" style="top:664px">Drafting</div>
<div class="dbtn" style="top:682px">Rendering</div>
<div class="dbtn" style="top:700px">Site</div>

<!-- ============ PROJECT BROWSER ============ -->
<div style="left:105px;top:142px;width:151px;height:576px;background:linear-gradient(90deg,#0a0a10 0 1px,#7890e6 1px 145px,#5a62d0 151px)"></div>
<div style="left:106px;top:142px;width:150px;height:20px;background:linear-gradient(#7d9ae6,#6d8be2 50%,#6584de)"></div>
<div class="nw" style="left:109px;top:145px;color:#dde6fa;font-weight:bold;font-size:12px;letter-spacing:0.12px">Project1.rvt - Project...</div>
<div style="left:238px;top:145px;width:13px;height:13px;background:#b04a64;border:1px solid #d8b8d8"></div>
<svg style="left:240px;top:147px" width="9" height="9"><path d="M1 1L8 8M8 1L1 8" stroke="#fff" stroke-width="2"/></svg>
<div style="left:109px;top:161px;width:144px;height:555px;background:#fff;border-left:2px solid #8a9282;border-right:2px solid #f6f6e6;border-top:2px solid #54524a"></div>
<!-- tree -->
<div id="tree" style="left:111px;top:163px;width:139px;height:536px;overflow:hidden">
<div style="left:8px;top:14px;width:1px;height:411px;background:repeating-linear-gradient(#9c9c9c 0 1px,transparent 1px 2px)"></div>
<div style="left:28px;top:14px;width:1px;height:314px;background:repeating-linear-gradient(#9c9c9c 0 1px,transparent 1px 2px)"></div>
<div style="left:48px;top:30px;width:1px;height:90px;background:repeating-linear-gradient(#9c9c9c 0 1px,transparent 1px 2px)"></div>
<div style="left:48px;top:142px;width:1px;height:74px;background:repeating-linear-gradient(#9c9c9c 0 1px,transparent 1px 2px)"></div>
<div style="left:48px;top:254px;width:1px;height:42px;background:repeating-linear-gradient(#9c9c9c 0 1px,transparent 1px 2px)"></div>
<div style="left:14px;top:8px;width:6px;height:1px;background:repeating-linear-gradient(90deg,#9c9c9c 0 1px,transparent 1px 2px)"></div>
<svg style="left:20px;top:3px" width="17" height="11"><path d="M1 5.5Q8.5 -2 16 5.5Q8.5 13 1 5.5Z" fill="#fff" stroke="#000" stroke-width="1.4"/><circle cx="8.5" cy="5.5" r="3" fill="#000"/><circle cx="8" cy="4.5" r="0.9" fill="#888"/></svg>
<div class="pm" style="left:4px;top:4px"></div>
<div class="tree" style="left:42px;top:2px;">Views (all)</div>
<div style="left:34px;top:24px;width:10px;height:1px;background:repeating-linear-gradient(90deg,#9c9c9c 0 1px,transparent 1px 2px)"></div>
<div class="pm" style="left:24px;top:20px"></div>
<div class="tree" style="left:46px;top:18px;">Floor Plans</div>
<div style="left:49px;top:40px;width:16px;height:1px;background:repeating-linear-gradient(90deg,#9c9c9c 0 1px,transparent 1px 2px)"></div>
<div style="left:63px;top:33px;width:78px;height:14px;background:#ece9d8"></div>
<div class="tree" style="left:66px;top:34px;font-weight:bold;letter-spacing:-0.1px;">Ground leve</div>
<div style="left:49px;top:56px;width:16px;height:1px;background:repeating-linear-gradient(90deg,#9c9c9c 0 1px,transparent 1px 2px)"></div>
<div class="tree" style="left:66px;top:50px;">Level 2</div>
<div style="left:49px;top:72px;width:16px;height:1px;background:repeating-linear-gradient(90deg,#9c9c9c 0 1px,transparent 1px 2px)"></div>
<div class="tree" style="left:66px;top:66px;">Level 3</div>
<div style="left:49px;top:88px;width:16px;height:1px;background:repeating-linear-gradient(90deg,#9c9c9c 0 1px,transparent 1px 2px)"></div>
<div class="tree" style="left:66px;top:82px;">Parapet</div>
<div style="left:49px;top:104px;width:16px;height:1px;background:repeating-linear-gradient(90deg,#9c9c9c 0 1px,transparent 1px 2px)"></div>
<div class="tree" style="left:66px;top:98px;">Roof</div>
<div style="left:49px;top:120px;width:16px;height:1px;background:repeating-linear-gradient(90deg,#9c9c9c 0 1px,transparent 1px 2px)"></div>
<div class="tree" style="left:66px;top:114px;">Site</div>
<div style="left:34px;top:136px;width:10px;height:1px;background:repeating-linear-gradient(90deg,#9c9c9c 0 1px,transparent 1px 2px)"></div>
<div class="pm" style="left:24px;top:132px"></div>
<div class="tree" style="left:46px;top:130px;">Ceiling Plans</div>
<div style="left:49px;top:152px;width:16px;height:1px;background:repeating-linear-gradient(90deg,#9c9c9c 0 1px,transparent 1px 2px)"></div>
<div class="tree" style="left:66px;top:146px;">Ground level</div>
<div style="left:49px;top:168px;width:16px;height:1px;background:repeating-linear-gradient(90deg,#9c9c9c 0 1px,transparent 1px 2px)"></div>
<div class="tree" style="left:66px;top:162px;">Level 2</div>
<div style="left:49px;top:184px;width:16px;height:1px;background:repeating-linear-gradient(90deg,#9c9c9c 0 1px,transparent 1px 2px)"></div>
<div class="tree" style="left:66px;top:178px;">Level 3</div>
<div style="left:49px;top:200px;width:16px;height:1px;background:repeating-linear-gradient(90deg,#9c9c9c 0 1px,transparent 1px 2px)"></div>
<div class="tree" style="left:66px;top:194px;">Parapet</div>
<div style="left:49px;top:216px;width:16px;height:1px;background:repeating-linear-gradient(90deg,#9c9c9c 0 1px,transparent 1px 2px)"></div>
<div class="tree" style="left:66px;top:210px;">Roof</div>
<div style="left:34px;top:232px;width:10px;height:1px;background:repeating-linear-gradient(90deg,#9c9c9c 0 1px,transparent 1px 2px)"></div>
<div class="pm p" style="left:24px;top:228px"></div>
<div class="tree" style="left:46px;top:226px;">3D Views</div>
<div style="left:34px;top:248px;width:10px;height:1px;background:repeating-linear-gradient(90deg,#9c9c9c 0 1px,transparent 1px 2px)"></div>
<div class="pm" style="left:24px;top:244px"></div>
<div class="tree" style="left:46px;top:242px;">Elevations (Building Elevation)</div>
<div style="left:49px;top:264px;width:16px;height:1px;background:repeating-linear-gradient(90deg,#9c9c9c 0 1px,transparent 1px 2px)"></div>
<div class="tree" style="left:66px;top:258px;">East</div>
<div style="left:49px;top:280px;width:16px;height:1px;background:repeating-linear-gradient(90deg,#9c9c9c 0 1px,transparent 1px 2px)"></div>
<div class="tree" style="left:66px;top:274px;">North</div>
<div style="left:49px;top:296px;width:16px;height:1px;background:repeating-linear-gradient(90deg,#9c9c9c 0 1px,transparent 1px 2px)"></div>
<div class="tree" style="left:66px;top:290px;">West</div>
<div style="left:34px;top:312px;width:10px;height:1px;background:repeating-linear-gradient(90deg,#9c9c9c 0 1px,transparent 1px 2px)"></div>
<div class="pm p" style="left:24px;top:308px"></div>
<div class="tree" style="left:46px;top:306px;">Sections (Building Section)</div>
<div style="left:34px;top:328px;width:10px;height:1px;background:repeating-linear-gradient(90deg,#9c9c9c 0 1px,transparent 1px 2px)"></div>
<div class="pm p" style="left:24px;top:324px"></div>
<div class="tree" style="left:46px;top:322px;">Walkthroughs</div>
<div style="left:9px;top:344px;width:11px;height:1px;background:repeating-linear-gradient(90deg,#9c9c9c 0 1px,transparent 1px 2px)"></div>
<svg style="left:20px;top:337px" width="17" height="14" shape-rendering="crispEdges"><rect x="1" y="1" width="14" height="12" fill="#fff" stroke="#000" stroke-width="2"/><rect x="3.5" y="3.5" width="2" height="2" fill="none" stroke="#000"/><path d="M7 3.5H9M10 3.5H13M7 5.5H13M3 8.5H5M3 10.5H5M7 8.5H9M10 8.5H13M7 10.5H9M10 10.5H13M4 9.5H6" stroke="#000"/></svg>
<div class="tree" style="left:42px;top:338px;">Legends</div>
<div style="left:9px;top:360px;width:11px;height:1px;background:repeating-linear-gradient(90deg,#9c9c9c 0 1px,transparent 1px 2px)"></div>
<svg style="left:20px;top:353px" width="17" height="14" shape-rendering="crispEdges"><rect x="1.5" y="0.5" width="13" height="13" fill="#fff" stroke="#000"/><path d="M4 2.5H12" stroke="#000"/><path d="M2 4.5H14M2 7.5H14M2 10.5H14M6.5 4V13M9.5 4V13" stroke="#000"/></svg>
<div class="tree" style="left:42px;top:354px;">Schedules/Quantities</div>
<div style="left:9px;top:376px;width:11px;height:1px;background:repeating-linear-gradient(90deg,#9c9c9c 0 1px,transparent 1px 2px)"></div>
<svg style="left:20px;top:370px" width="17" height="12" shape-rendering="crispEdges"><rect x="1.5" y="0.5" width="13" height="10" fill="#fff" stroke="#000" stroke-width="1.5"/><path d="M11.5 1V10" stroke="#000"/><path d="M12.5 3H13.5M12.5 5H13.5M12.5 7H13.5" stroke="#000"/></svg>
<div class="tree" style="left:42px;top:370px;">Sheets (all)</div>
<div style="left:14px;top:392px;width:6px;height:1px;background:repeating-linear-gradient(90deg,#9c9c9c 0 1px,transparent 1px 2px)"></div>
<svg style="left:20px;top:385px" width="17" height="15" shape-rendering="crispEdges"><rect x="2.5" y="4.5" width="2" height="9" fill="#fff" stroke="#000"/><path d="M7.5 4.5L14.5 1.5V10.5L7.5 12.5Z" fill="#fff" stroke="#000"/><path d="M11 3V11M7.5 8.5L14.5 6" stroke="#000"/></svg>
<div class="pm p" style="left:4px;top:388px"></div>
<div class="tree" style="left:42px;top:386px;">Families</div>
<div style="left:14px;top:408px;width:6px;height:1px;background:repeating-linear-gradient(90deg,#9c9c9c 0 1px,transparent 1px 2px)"></div>
<svg style="left:20px;top:400px" width="17" height="16" shape-rendering="crispEdges"><rect x="0.5" y="0.5" width="15" height="14" fill="#fff" stroke="#000" stroke-dasharray="2 1"/><rect x="3.5" y="2.5" width="4" height="6" fill="none" stroke="#000"/><rect x="3.5" y="9.5" width="4" height="3" fill="none" stroke="#000"/><rect x="8.5" y="2.5" width="4" height="10" fill="none" stroke="#000"/></svg>
<div class="pm p" style="left:4px;top:404px"></div>
<div class="tree" style="left:42px;top:402px;">Groups</div>
<div style="left:9px;top:424px;width:11px;height:1px;background:repeating-linear-gradient(90deg,#9c9c9c 0 1px,transparent 1px 2px)"></div>
<svg style="left:20px;top:419px" width="17" height="11" shape-rendering="crispEdges"><rect x="1.5" y="0.5" width="13" height="9" fill="#fff" stroke="#000" stroke-width="1.5"/></svg>
<div class="tree" style="left:42px;top:418px;">Revit Links</div>
</div>
<!-- PB h scrollbar -->
<div style="left:110px;top:699px;width:142px;height:17px;background:#f7f6f1;border-top:1px solid #efeee6"></div>
<div style="left:111px;top:701px;width:15px;height:14px;background:linear-gradient(#d8e4fc,#b8cdf8);border:1px solid #c8d6f6;border-radius:1px"></div>
<svg style="left:115px;top:704px" width="8" height="9"><path d="M6 1L2 4.5L6 8" stroke="#4d6185" stroke-width="2" fill="none"/></svg>
<div style="left:128px;top:701px;width:77px;height:14px;background:linear-gradient(#d4e0fb,#b9cef8);border:1px solid #a8bcea;border-radius:2px"></div>
<svg style="left:162px;top:704px" width="8" height="8"><path d="M1 0V8M3 0V8M5 0V8M7 0V8" stroke="#8ea6dc"/></svg>
<div style="left:236px;top:701px;width:15px;height:14px;background:linear-gradient(#d8e4fc,#b8cdf8);border:1px solid #c8d6f6;border-radius:1px"></div>
<svg style="left:240px;top:704px" width="8" height="9"><path d="M2 1L6 4.5L2 8" stroke="#4d6185" stroke-width="2" fill="none"/></svg>


<div style="left:262px;top:141px;width:760px;height:1px;background:#716f64"></div>
<div style="left:256px;top:142px;width:6px;height:576px;background:linear-gradient(90deg,#ece9d8 0 1px,#f8f6ea 1px 3px,#ece9d8 3px)"></div>
<div style="left:262px;top:141px;width:2px;height:577px;background:linear-gradient(90deg,#8f8c80,#b8b5a8)"></div>
<div style="left:1022px;top:141px;width:2px;height:577px;background:#f4f3ec"></div>
<div style="left:264px;top:142px;width:741px;height:557px;background:#fff"></div>
<svg style="left:0;top:0" width="1024" height="768"><defs><clipPath id="dc"><rect x="264" y="142" width="741" height="557"/></clipPath></defs><g clip-path="url(#dc)"><rect x="278" y="142" width="3" height="150" fill="#000"/><rect x="305" y="142" width="3" height="150" fill="#000"/><rect x="332" y="142" width="3" height="150" fill="#000"/><rect x="359" y="142" width="3" height="150" fill="#000"/><rect x="386" y="142" width="3" height="150" fill="#000"/><rect x="413" y="142" width="3" height="150" fill="#000"/><rect x="440" y="142" width="3" height="150" fill="#000"/><rect x="467" y="142" width="4" height="145" fill="#000"/><rect x="264" y="289" width="199" height="3.8" fill="#000"/><rect x="264" y="347" width="181" height="3.8" fill="#000"/><rect x="267" y="370" width="109" height="2" fill="#000"/><rect x="264" y="377" width="181" height="3.6" fill="#000"/><rect x="264" y="386" width="181" height="3.6" fill="#000"/><rect x="264" y="393" width="181" height="3" fill="#000"/><path d="M446.5 346H463V397H446.5Q443.5 397 443.5 394V349Q443.5 346 446.5 346ZM449.7 353V391.2H462V353Z" fill="#000" fill-rule="evenodd"/><path d="M466 283.5H634Q639 283.5 639 288.5V455Q639 460 634 460H466.5Q461.5 460 461.5 455V288.5Q461.5 283.5 466 283.5ZM477 298.5V445H623.5V298.5Z" fill="#000" fill-rule="evenodd"/><rect x="549" y="213" width="2" height="432" fill="#000"/><rect x="483" y="370" width="434" height="2" fill="#000"/><rect x="518" y="340" width="64" height="14.6" rx="6" fill="#000"/><circle cx="573.5" cy="342.5" r="4" fill="#000"/><rect x="518" y="389.5" width="64" height="14" rx="6" fill="#000"/><rect x="543" y="354" width="14.2" height="36" fill="#000"/><path d="M526.9 354H533.7L535.5 366.4H543V373.3H530Z" fill="#000"/><path d="M573 354H580.5L579.7 368L557 368V362.3L572.4 361Z" fill="#000"/><line x1="562" y1="368" x2="612" y2="699" stroke="#000" stroke-width="3.6"/><line x1="571" y1="368" x2="621.5" y2="699" stroke="#000" stroke-width="3.4"/><line x1="590.5" y1="459" x2="629.5" y2="699" stroke="#000" stroke-width="3.2"/><line x1="546" y1="460" x2="584" y2="699" stroke="#000" stroke-width="3.4"/><line x1="687.5" y1="480" x2="915.5" y2="520.5" stroke="#000" stroke-width="2.8"/><path d="M687,480 C685.3,491.8 678.9,530.2 677,551 C675.1,571.8 675.2,586.5 675.8,605 C676.3,623.5 678.5,646.3 680.3,662 C682.1,677.7 685.5,692.8 686.5,699" fill="none" stroke="#000" stroke-width="2.8"/><path d="M760.5,492.5 C759.0,503.9 753.3,542.8 751.6,561 C749.9,579.2 749.8,585.2 750.3,601.5 C750.8,617.8 752.5,642.5 754.3,658.8 C756.1,675.0 759.9,692.3 761,699" fill="none" stroke="#000" stroke-width="2.8"/><path d="M934.5,524 C933.7,531.3 930.4,552.1 929.5,567.8 C928.6,583.5 928.0,602.7 928.9,618.4 C929.8,634.1 932.0,648.8 934.6,662.2 C937.2,675.6 943.0,692.9 944.7,699" fill="none" stroke="#000" stroke-width="2.8"/><rect x="344" y="341.8" width="12" height="3" fill="#000"/><rect x="483.3" y="203.0" width="10.699999999999989" height="3" fill="#000"/><rect x="621" y="272.5" width="12" height="3" fill="#000"/><rect x="898" y="202.5" width="11.799999999999955" height="3" fill="#000"/><rect x="829" y="273.0" width="11" height="3" fill="#000"/><rect x="967" y="273.0" width="12" height="3" fill="#000"/><rect x="689.2" y="342.0" width="13.199999999999932" height="3" fill="#000"/><rect x="760.5" y="410.8" width="10.700000000000045" height="3" fill="#000"/><rect x="967.3" y="410.8" width="12.100000000000023" height="3" fill="#000"/><rect x="897.4" y="479.9" width="12.800000000000068" height="3" fill="#000"/><rect x="621" y="549.5" width="11.700000000000045" height="3" fill="#000"/><rect x="966.6" y="618.9" width="12.399999999999977" height="3" fill="#000"/><polygon points="568.1999999999999,179.6 571.4,179.6 567.7,188.7 564.5,188.7" fill="#000"/><polygon points="663.3,153 666.5,153 662.6,162.4 659.4,162.4" fill="#000"/><polygon points="909.8,141.3 913,141.3 910.9000000000001,145.8 907.7,145.8" fill="#000"/><polygon points="937.4,232.3 940.6,232.3 936.5,241.5 933.3,241.5" fill="#000"/><polygon points="652.8,307.8 656,307.8 653.2,316.7 650,316.7" fill="#000"/><polygon points="808.5999999999999,316.7 811.8,316.7 807.2,325.6 804,325.6" fill="#000"/><polygon points="678.8,402.3 682,402.3 678.8000000000001,410.5 675.6,410.5" fill="#000"/><polygon points="832.8,412.3 836,412.3 832.9000000000001,421.2 829.7,421.2" fill="#000"/><polygon points="953.4,481.8 956.6,481.8 952.6,490.4 949.4,490.4" fill="#000"/><polygon points="943.8,635.2 947,635.2 942.8000000000001,644.6 939.6,644.6" fill="#000"/><polygon points="647.4,218.5 650.6,218.5 655.6,227.5 652.4,227.5" fill="#000"/><polygon points="767.2,149.2 770.4000000000001,149.2 775,158.5 771.8,158.5" fill="#000"/><polygon points="862.3,174.3 865.5,174.3 869.5,183.5 866.3,183.5" fill="#000"/><polygon points="716.6,338 719.8000000000001,338 724.5,347 721.3,347" fill="#000"/><polygon points="871.7,329.2 874.9000000000001,329.2 878,337.4 874.8,337.4" fill="#000"/><polygon points="966.2,354.2 969.4000000000001,354.2 973.3,363 970.0999999999999,363" fill="#000"/><polygon points="846,423.7 849.2,423.7 853.2,432.6 850.0,432.6" fill="#000"/><polygon points="632.7,468.8 635.9000000000001,468.8 638.5,475.5 635.3,475.5" fill="#000"/><polygon points="641.9,622.8 645.1,622.8 648,631 644.8,631" fill="#000"/><rect x="524" y="142" width="2" height="1.5" fill="#000"/></g></svg>
<div style="left:1005px;top:142px;width:17px;height:557px;background:linear-gradient(90deg,#eeede5,#fbfbf8 40%,#f7f6f1)"></div>
<div style="left:1006px;top:143px;width:15px;height:15px;background:linear-gradient(135deg,#dce7fd,#c2d4fb 60%,#b0c6f7);border:1px solid #fff;border-radius:2px;box-shadow:0 1px 0 #8fa6d8"></div>
<svg style="left:1009px;top:146px" width="10" height="8"><path d="M1 6L5 2L9 6" stroke="#4d6185" stroke-width="2" fill="none"/></svg>
<div style="left:1006px;top:683px;width:15px;height:15px;background:linear-gradient(135deg,#dce7fd,#c2d4fb 60%,#b0c6f7);border:1px solid #fff;border-radius:2px;box-shadow:0 1px 0 #8fa6d8"></div>
<svg style="left:1009px;top:687px" width="10" height="8"><path d="M1 2L5 6L9 2" stroke="#4d6185" stroke-width="2" fill="none"/></svg>
<div style="left:1006px;top:412px;width:15px;height:16px;background:linear-gradient(135deg,#dce7fd,#c2d4fb 60%,#b0c6f7);border:1px solid #fff;border-radius:2px;box-shadow:0 1px 0 #8fa6d8"></div>
<svg style="left:1009px;top:416px" width="9" height="8"><path d="M0 0.5H9M0 2.5H9M0 4.5H9M0 6.5H9" stroke="#fff"/><path d="M0 1.5H9M0 3.5H9M0 5.5H9M0 7.5H9" stroke="#8ea6dc"/></svg>
<div style="left:264px;top:699px;width:758px;height:18px;background:#ece9d8"></div>
<div class="lbl" style="left:275px;top:703px;font-size:11.5px;letter-spacing:-0.25px">1/8" = 1'-0"</div>
<svg style="left:347px;top:702px" width="11" height="11"><rect x="0.7" y="0.7" width="9.6" height="9.6" fill="#fff" stroke="#000" stroke-width="1.4"/><path d="M2 2h2v2H2zM6 2h2v2H6zM4 4h2v2H4zM8 4h1v2H8zM2 6h2v2H2zM6 6h2v2H6zM4 8h2v1H4z" fill="#777"/></svg>
<svg style="left:364px;top:700px" width="17" height="13"><path d="M1 5L9 1L16 4V8L8 12L1 9Z" fill="#fff" stroke="#333" stroke-width="1.1"/><path d="M1 5L8 8L16 4M8 8V12" fill="none" stroke="#333" stroke-width="1.1"/></svg>
<svg style="left:385px;top:700px" width="14" height="13"><path d="M1 11Q1 3 9 1H12Q12 7 8 10Z" fill="#fff" stroke="#888"/><path d="M3 12H13L10 9" fill="#b8c0d0"/></svg>
<svg style="left:406px;top:700px" width="14" height="13"><path d="M4 1V12M9 1V12M1 4H13M1 9H13" stroke="#0000ff" stroke-width="2.2"/><path d="M1 12L13 1" stroke="#a00000" stroke-width="1.3"/></svg>
<svg style="left:427px;top:699px" width="15" height="14"><path d="M4 4V13M1 8H13M10 8V12M4 12H13" stroke="#0000ff" stroke-width="2.2" fill="none"/><path d="M10 1Q13 1 13 4V7H10V4Q10 1 10 1" fill="#c8c8c8" stroke="#555" stroke-width="0.8"/></svg>
<svg style="left:447px;top:700px" width="17" height="12"><path d="M1 4Q3 2 5 5" fill="none" stroke="#222" stroke-width="1.2"/><circle cx="8" cy="8" r="3" fill="#d0e8f0" stroke="#222" stroke-width="1.2"/><circle cx="13.5" cy="5.5" r="3" fill="#d0e8f0" stroke="#222" stroke-width="1.2"/><path d="M11 7L11 6.5M13 2Q14 0 15 1" stroke="#222" fill="none"/></svg>
<svg style="left:471px;top:700px" width="10" height="13"><circle cx="5" cy="5" r="4" fill="#d8e4f0" stroke="#444" stroke-width="1"/><rect x="3" y="9" width="4" height="3" fill="#888"/></svg>
<div style="left:489px;top:700px;width:15px;height:15px;background:linear-gradient(135deg,#dce7fd,#c2d4fb 60%,#b0c6f7);border:1px solid #fff;border-radius:2px;box-shadow:0 1px 0 #8fa6d8"></div>
<svg style="left:493px;top:703px" width="8" height="10"><path d="M6 1L2 5L6 9" stroke="#4d6185" stroke-width="2" fill="none"/></svg>
<div style="left:505px;top:699px;width:484px;height:17px;background:linear-gradient(#eeede5,#fbfbf8 40%,#f7f6f1)"></div>
<div style="left:739px;top:700px;width:16px;height:15px;background:linear-gradient(135deg,#dce7fd,#c2d4fb 60%,#b0c6f7);border:1px solid #fff;border-radius:2px;box-shadow:0 1px 0 #8fa6d8"></div>
<svg style="left:743px;top:704px" width="8" height="8"><path d="M0.5 0V8M2.5 0V8M4.5 0V8M6.5 0V8" stroke="#fff"/><path d="M1.5 0V8M3.5 0V8M5.5 0V8M7.5 0V8" stroke="#8ea6dc"/></svg>
<div style="left:989px;top:700px;width:15px;height:15px;background:linear-gradient(135deg,#dce7fd,#c2d4fb 60%,#b0c6f7);border:1px solid #fff;border-radius:2px;box-shadow:0 1px 0 #8fa6d8"></div>
<svg style="left:993px;top:703px" width="8" height="10"><path d="M2 1L6 5L2 9" stroke="#4d6185" stroke-width="2" fill="none"/></svg>
<div style="left:1005px;top:699px;width:17px;height:17px;background:#ece9d8"></div>
<svg style="left:1008px;top:702px" width="12" height="12"><path d="M9 2h2v2H9zM6 5h2v2H6zM9 5h2v2H9zM3 8h2v2H3zM6 8h2v2H6zM9 8h2v2H9z" fill="#c6c3b4"/></svg>
<div style="left:256px;top:717px;width:768px;height:1px;background:#f8f7f0"></div>

<!-- ============ STATUS BAR ============ -->
<div style="left:0;top:718px;width:1024px;height:20px;background:#ece9d8"></div>
<div style="left:256px;top:718px;width:768px;height:1px;background:#c8c5b5"></div>
<div class="lbl" style="left:2px;top:724px;font-size:11.5px;letter-spacing:-0.25px">Click to select, TAB for alternates, CTRL adds, SHIFT unselects.</div>
<div style="left:810px;top:720px;width:2px;height:16px;border-left:1px solid #cfcbbb;border-right:1px solid #fff"></div>
<div style="left:837px;top:720px;width:2px;height:16px;border-left:1px solid #cfcbbb;border-right:1px solid #fff"></div>
<div style="left:867px;top:720px;width:2px;height:16px;border-left:1px solid #cfcbbb;border-right:1px solid #fff"></div>
<div style="left:900px;top:720px;width:2px;height:16px;border-left:1px solid #cfcbbb;border-right:1px solid #fff"></div>
<div style="left:996px;top:720px;width:2px;height:16px;border-left:1px solid #cfcbbb;border-right:1px solid #fff"></div>
<svg style="left:906px;top:721px" width="15" height="15"><path d="M0.5 0.5H14.5L9 7V14L6 12.5V7Z" fill="#5a82c8" stroke="#1a3c80"/><path d="M2.5 1.5H12" stroke="#c8dcf8"/></svg>
<div class="lbl" style="left:922px;top:724px;font-size:11.5px">:0</div>
<svg style="left:1003px;top:720px" width="17" height="16"><circle cx="7" cy="5" r="4" fill="#c0d4f0" stroke="#4a70b0"/><path d="M3 9L1 14H7" stroke="#4a70b0" fill="none"/><path d="M11 1L6 6" stroke="#4a70b0"/><path d="M11 6L16 15H6Z" fill="#ffe000" stroke="#806000" stroke-width="0.8"/><rect x="10.3" y="8.5" width="1.5" height="3.5" fill="#000"/><rect x="10.3" y="12.7" width="1.5" height="1.5" fill="#000"/></svg>

<!-- ============ TASKBAR ============ -->
<div style="left:0;top:738px;width:1024px;height:30px;background:linear-gradient(#2a50b8 0 1px,#3080e8 1px 2px,#44a0e4 2px 3px,#3080f0 3px 4px,#2a68d4 4px 5px,#2258d4 6px,#2156d4 12px,#245edc 22px,#2462e2 26px,#2050c0 28.5px,#1a44a8 30px)"></div>
<div style="left:0;top:738px;width:97px;height:30px;border-radius:0 12px 12px 0;background:linear-gradient(#78c878 0,#58b058 2px,#3f9f3f 5px,#379537 10px,#318d31 20px,#2b822b 27px,#256f25 30px);box-shadow:inset -2px 0 3px rgba(0,40,0,0.4)"></div>
<svg style="left:10px;top:743px" width="21" height="19"><path d="M2 3Q6 0 10 2L9 9Q5 7 1 9Z" fill="#f05a20"/><path d="M11 2Q15 4 19 2L18 9Q14 11 10 9Z" fill="#60c030"/><path d="M1 10Q5 8 9 10L8 17Q4 15 0 17Z" fill="#3a80f0"/><path d="M10 10Q14 12 18 10L17 17Q13 19 9 17Z" fill="#f8c020"/></svg>
<div class="nw" style="left:35px;top:744px;color:#fff;font-weight:bold;font-style:italic;font-size:18px;letter-spacing:-0.2px;text-shadow:1px 1px 1px #1a4a1a">start</div>
<div style="left:107px;top:742px;width:158px;height:23px;background:linear-gradient(#4f92f8,#3b7ff2 50%,#3678ee);border:1px solid #2a62d4;border-radius:3px;box-shadow:inset 1px 1px 0 #6aa6fa"></div>
<svg style="left:116px;top:744px" width="17" height="17"><circle cx="9" cy="9.5" r="6" fill="#3aa8f8" stroke="#0a4ab0" stroke-width="1"/><rect x="5" y="8.5" width="8" height="2" fill="#fff"/><path d="M5.5 7.5Q9 3.5 12.5 7.5" fill="none" stroke="#fff" stroke-width="1.5"/><path d="M12 12Q9 14 6 12" fill="none" stroke="#fff" stroke-width="1.5"/><path d="M1.5 15Q-1 12 6 5.5Q13 0 15.5 1.5Q17 3 13 7" fill="none" stroke="#f0b020" stroke-width="1.6"/></svg>
<div class="nw" style="left:135px;top:747px;color:#fff;font-size:12px;letter-spacing:-0.28px">RevitCity.com | Foru...</div>
<div style="left:267px;top:742px;width:157px;height:23px;background:linear-gradient(#4f92f8,#3b7ff2 50%,#3678ee);border:1px solid #2a62d4;border-radius:3px;box-shadow:inset 1px 1px 0 #6aa6fa"></div>
<div style="left:276px;top:745px;width:15px;height:16px;background:#1c3c78;border:1px solid #0c2858"></div>
<div class="nw" style="left:278px;top:748px;color:#c8dcff;font-size:10px;font-weight:bold">Ps</div>
<div class="nw" style="left:296px;top:747px;color:#fff;font-size:12px;letter-spacing:-0.4px">Adobe Photoshop CS...</div>
<div style="left:426px;top:742px;width:160px;height:23px;background:linear-gradient(#1a44b0,#1e4fc4 30%,#1f52c8);border:1px solid #173e9c;border-radius:3px;box-shadow:inset 1px 1px 1px #102c80"></div>
<svg style="left:437px;top:744px" width="17" height="18"><rect x="1" y="4" width="14" height="13" fill="#f4efe6" stroke="#c8c0b8" stroke-width="0.6"/><text x="2.5" y="11" font-family="Liberation Sans" font-weight="bold" font-size="11" fill="#c04a90">R</text><text x="8" y="17" font-family="Liberation Sans" font-weight="bold" font-size="8" fill="#111">A</text></svg>
<div class="nw" style="left:455px;top:747px;color:#fff;font-size:12px;letter-spacing:0">Revit Architecture 20...</div>
<div style="left:895px;top:738px;width:129px;height:30px;background:linear-gradient(#1ea0f4 0,#1592ea 3px,#1290e8 20px,#0e80d8 30px);border-left:1px solid #0a5ab8"></div>
<svg style="left:906px;top:745px" width="15" height="15"><path d="M3 7L8 12L15 9L10 5Z" fill="#a0a8b0" stroke="#404850" stroke-width="0.8"/><path d="M2 4L6 0V2H9V6H6V8Z" fill="#40c040"/></svg>
<svg style="left:924px;top:745px" width="15" height="15"><circle cx="6" cy="6" r="5" fill="#9aa0a8" stroke="#303840"/><circle cx="6" cy="6" r="2" fill="#505860"/><circle cx="10.5" cy="10.5" r="4" fill="#e02020" stroke="#fff" stroke-width="0.8"/><path d="M8 10.5H13" stroke="#fff" stroke-width="1.5"/></svg>
<div style="left:942px;top:745px;width:16px;height:16px;background:#f08a10"></div>
<svg style="left:942px;top:745px" width="16" height="16"><circle cx="8" cy="8" r="6.5" fill="none" stroke="#ffd8a0" stroke-dasharray="1 1"/><rect x="7" y="3" width="2.2" height="7" fill="#000"/><rect x="7" y="11" width="2.2" height="2" fill="#000"/></svg>
<div class="nw" style="left:965px;top:747px;color:#fff;font-size:12px;letter-spacing:-0.4px">11:57 AM</div>


</body></html>
